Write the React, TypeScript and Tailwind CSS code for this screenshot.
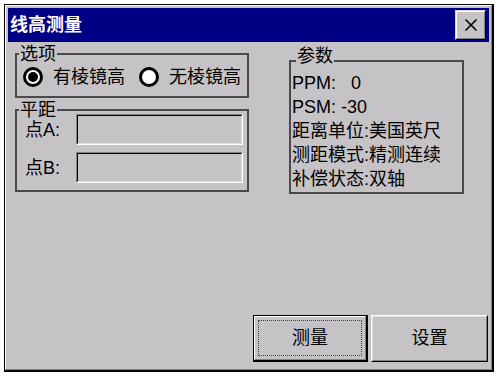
import React from "react"

const FONT = "font-['Liberation_Sans','Noto_Sans_CJK_SC',sans-serif]"

function Radio({ checked, label }: { checked: boolean; label: string }) {
  return (
    <div className="flex items-center gap-[10px]">
      <svg width="20" height="20" viewBox="0 0 20 20" className="shrink-0">
        <circle cx="10" cy="10" r="8.5" fill="#ffffff" stroke="#000000" strokeWidth="3" />
        {checked && <circle cx="10" cy="10" r="5" fill="#000000" />}
      </svg>
      <span className="text-[18px] leading-[24px]">{label}</span>
    </div>
  )
}

function SunkenInput() {
  return (
    <div className="w-[167px] h-[31px] border border-t-[#848284] border-l-[#848284] border-r-white border-b-white">
      <div className="h-full border border-t-black border-l-black border-r-[#dedbde] border-b-[#dedbde] bg-[#c6c3c6]" />
    </div>
  )
}

export default function App() {
  return (
    <div className={`w-[500px] h-[379px] bg-white pt-[4px] pl-[4px] text-black ${FONT}`}>
      {/* window frame */}
      <div className="w-[490px] h-[368px] border-t border-l border-r-2 border-b-2 border-black">
        <div className="h-full border-t border-l border-white border-r border-b border-r-[#848284] border-b-[#848284] bg-[#c6c3c6] p-[2px] flex flex-col">
          {/* title bar */}
          <div className="h-[34px] bg-[#000084] flex items-center justify-between pl-[2px] pr-[3px]">
            <span className="text-white font-bold text-[18px] leading-[22px]">线高测量</span>
            <div className="w-[31px] h-[30px] border-t border-l border-[#dedbde] border-r border-b border-r-black border-b-black">
              <div className="h-full bg-[#c6c3c6] border-t border-l border-white border-r border-b border-r-[#848284] border-b-[#848284] flex items-center justify-center">
                <svg width="14" height="14" viewBox="0 0 14 14">
                  <path d="M1.5 1.5 L12.5 12.5 M12.5 1.5 L1.5 12.5" stroke="#000000" strokeWidth="1.6" />
                </svg>
              </div>
            </div>
          </div>

          {/* client area */}
          <div className="flex-1 flex flex-col">
            <div className="flex pl-[7px] gap-[40px]">
              {/* left column */}
              <div className="w-[234px] flex flex-col">
                <fieldset className="mt-[1px] h-[55px] border-2 border-[#4a494c]">
                  <legend className="ml-[2px] px-[1px] text-[18px] leading-[22px]">选项</legend>
                  <div className="h-[24px] flex items-center pl-[6px] gap-[14px]">
                    <Radio checked label="有棱镜高" />
                    <Radio checked={false} label="无棱镜高" />
                  </div>
                </fieldset>

                <fieldset className="mt-[1px] h-[93px] border-2 border-[#4a494c]">
                  <legend className="ml-[2px] px-[1px] text-[18px] leading-[22px]">平距</legend>
                  <div className="-mt-[7px] flex flex-col gap-[7px] pl-[8px]">
                    <div className="flex items-center">
                      <span className="w-[51px] text-[18px] leading-[24px]">点A:</span>
                      <SunkenInput />
                    </div>
                    <div className="flex items-center">
                      <span className="w-[51px] text-[18px] leading-[24px]">点B:</span>
                      <SunkenInput />
                    </div>
                  </div>
                </fieldset>
              </div>

              {/* right column */}
              <fieldset className="w-[175px] mt-[3px] h-[149px] border-2 border-[#4a494c]">
                <legend className="ml-[5px] px-[1px] pb-[10px] text-[18px] leading-[22px]">参数</legend>
                <div className="-mt-[6px] pl-[1px] text-[18px] leading-[24px] whitespace-pre">
                  <div>PPM:   0</div>
                  <div>PSM: -30</div>
                  <div>距离单位:美国英尺</div>
                  <div>测距模式:精测连续</div>
                  <div>补偿状态:双轴</div>
                </div>
              </fieldset>
            </div>

            {/* buttons */}
            <div className="mt-auto flex justify-end gap-[3px] pr-[1px] pb-[5px]">
              <div className="w-[115px] h-[47px] border border-r-2 border-b-2 border-black">
                <div className="h-full border-t border-l border-white border-r border-b border-r-[#848284] border-b-[#848284] p-[3px]">
                  <div className="h-full border border-dotted border-[#424142] flex items-center justify-center text-[18px]">
                    测量
                  </div>
                </div>
              </div>
              <div className="w-[117px] h-[47px] border-t border-l border-white border-r border-b border-r-black border-b-black">
                <div className="h-full border-t border-l border-[#dedbde] border-r border-b border-r-[#848284] border-b-[#848284] flex items-center justify-center text-[18px]">
                  设置
                </div>
              </div>
            </div>
          </div>
        </div>
      </div>
    </div>
  )
}
